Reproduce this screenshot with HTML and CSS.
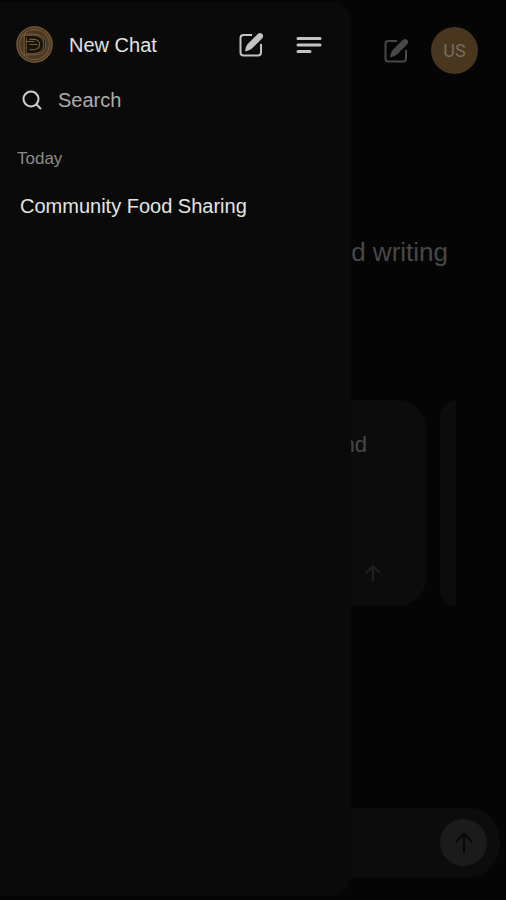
FILE: index.html
```html
<!DOCTYPE html>
<html lang="en">
<head>
  <meta charset="UTF-8">
  <meta name="viewport" content="width=device-width, initial-scale=1.0">
  <title>New Chat</title>
  <link rel="stylesheet" href="styles.css">
</head>
<body>
  <div class="app">
    <main class="chat">
      <header class="chat-header">
        <button class="icon-button" type="button" aria-label="New chat">
          <svg class="icon-edit" viewBox="0 0 24 24"><path class="stroke" d="M13 2H4.500Q1.500 2 1.500 5V19.500Q1.500 22.500 4.500 22.500H19Q22 22.500 22 19.500V11"/><path class="fill" d="M18.800 1Q21 -1 23 .8T23.500 5L13 15.600Q10.500 17.800 6 18.500Q6.200 13.800 8.500 11.300Z"/></svg>
        </button>
        <button class="avatar" type="button">US</button>
      </header>

      <h1 class="headline">d writing</h1>

      <div class="cards">
        <button class="card" type="button">
          <span>nd</span>
          <svg class="card-arrow" viewBox="0 0 18 18"><path d="M9 17V2M2 9L9 2L16 9"/></svg>
        </button>
        <div class="card card-next"></div>
      </div>

      <form class="composer">
        <button class="send" type="button" aria-label="Send">
          <svg viewBox="0 0 24 24"><path d="M12 23V2M3 11L12 2L21 11"/></svg>
        </button>
      </form>
    </main>

    <aside class="drawer">
      <div class="drawer-header">
        <svg class="logo" viewBox="0 0 36 36">
          <circle class="logo-disc" cx="18" cy="18" r="18"/>
          <circle cx="18" cy="18" r="17"/>
          <circle cx="18" cy="18" r="14.500"/>
          <path class="logo-core" d="M8 8H19Q29 9 29 18T19 28H8Z"/>
          <path d="M7 9H18Q27 10 27 18T18 27H10V11M13 13H18Q23 14 23 18T18 23H13M13 18H21M10 15H18"/>
        </svg>
        <h2 class="drawer-title">New Chat</h2>
        <button class="icon-button" type="button" aria-label="Start new chat">
          <svg class="icon-edit" viewBox="0 0 24 24"><path class="stroke" d="M13 2H4.500Q1.500 2 1.500 5V19.500Q1.500 22.500 4.500 22.500H19Q22 22.500 22 19.500V11"/><path class="fill" d="M18.800 1Q21 -1 23 .8T23.500 5L13 15.600Q10.500 17.800 6 18.500Q6.200 13.800 8.500 11.300Z"/></svg>
        </button>
        <button class="icon-button menu-button" type="button" aria-label="Close menu">
          <svg class="icon-menu" viewBox="0 0 24 24"><path d="M1 5.500H23M1 12H23M1 18.500H13"/></svg>
        </button>
      </div>

      <button class="search" type="button">
        <svg class="icon-search" viewBox="0 0 20 20"><circle cx="9" cy="9" r="7.500"/><path d="M14.500 14.500L19 19"/></svg>
        <span>Search</span>
      </button>

      <h3 class="history-label">Today</h3>
      <a class="history-item" href="#">Community Food Sharing</a>
    </aside>
  </div>
</body>
</html>
```
FILE: styles.css
```css
* {
  box-sizing: border-box;
  margin: 0;
  padding: 0;
}
body {
  background-color: #050505;
  font-family: "Liberation Sans", Arial, sans-serif;
}
button {
  background: none;
  border: none;
  color: inherit;
  font: inherit;
  cursor: pointer;
}
svg {
  display: block;
  fill: none;
  stroke: currentColor;
  overflow: visible;
}
.app {
  position: relative;
  min-height: 100vh;
  overflow: hidden;
}

/* Chat page under the drawer */
.chat {
  display: flex;
  flex-direction: column;
  min-height: 100vh;
  padding: 27px 6px 23px 0;
  color: #484848;
}
.chat-header {
  display: flex;
  align-items: center;
  justify-content: flex-end;
  gap: 23px;
  padding-right: 22px;
}
.avatar {
  width: 47px;
  height: 47px;
  border-radius: 50%;
  background-color: #48361f;
  color: #786c5c;
  font-family: Roboto, sans-serif;
  font-size: 18px;
}
.headline {
  margin-top: 162px;
  padding-right: 52px;
  text-align: right;
  font-size: 26px;
  line-height: 32px;
  font-weight: normal;
}
.cards {
  display: flex;
  justify-content: flex-end;
  gap: 14px;
  margin: 132px 44px 0 0;
  overflow: hidden;
}
.card {
  display: flex;
  flex-direction: column;
  align-items: flex-end;
  justify-content: space-between;
  width: 260px;
  height: 206px;
  padding: 32px 59px 24px 24px;
  border-radius: 28px;
  background-color: #0c0c0c;
  font-size: 22px;
  line-height: 26px;
}
.card-next {
  width: 16px;
  padding: 0;
  border-radius: 16px 0 0 16px;
}
.card-arrow {
  width: 18px;
  height: 18px;
  margin-right: -15px;
  color: #202020;
  stroke-width: 2;
}
.composer {
  display: flex;
  align-items: center;
  justify-content: flex-end;
  height: 69px;
  margin-top: auto;
  padding-right: 13px;
  border-radius: 32px;
  background-color: #0c0c0c;
}
.send {
  display: flex;
  align-items: center;
  justify-content: center;
  width: 47px;
  height: 47px;
  border-radius: 50%;
  background-color: #1b1b1b;
  color: #060606;
}
.send svg {
  width: 22px;
  height: 22px;
  stroke-width: 2;
}

/* Drawer */
.drawer {
  position: absolute;
  top: 2px;
  bottom: 4px;
  left: 0;
  width: 351px;
  max-width: 70%;
  padding: 24px 30px 24px 16px;
  border-radius: 0 20px 20px 0;
  background-color: #0a0a0a;
  color: #e4e4e4;
}
.drawer-header {
  display: flex;
  align-items: center;
}
.logo {
  width: 37px;
  height: 37px;
  color: #765b3c;
}
.logo-disc {
  fill: #4a3822;
  stroke: none;
}
.logo-core {
  fill: #17120d;
}
.drawer-title {
  flex: 1;
  margin-left: 16px;
  font-size: 20px;
  line-height: 26px;
  font-weight: normal;
  white-space: nowrap;
}
.icon-button {
  color: inherit;
}
.drawer .icon-button {
  color: #c4c4c4;
}
.menu-button {
  margin-left: 34px;
}
.icon-edit,
.icon-menu {
  width: 24px;
  height: 24px;
  stroke-width: 2;
}
.icon-edit .fill {
  fill: currentColor;
  stroke: none;
}
.icon-menu {
  stroke-width: 3;
  stroke-linecap: round;
}
.search {
  display: flex;
  align-items: center;
  gap: 16px;
  margin-top: 24px;
  padding-left: 6px;
  color: #adadad;
  font-size: 20px;
  line-height: 26px;
}
.icon-search {
  width: 20px;
  height: 20px;
  color: #d0d0d0;
  stroke-width: 2;
}
.history-label {
  margin-top: 36px;
  padding-left: 1px;
  color: #8c8c8c;
  font-size: 17px;
  line-height: 20px;
  font-weight: normal;
}
.history-item {
  display: block;
  margin-top: 24px;
  padding-left: 4px;
  color: inherit;
  font-size: 20px;
  line-height: 26px;
  text-decoration: none;
  white-space: nowrap;
}
```
